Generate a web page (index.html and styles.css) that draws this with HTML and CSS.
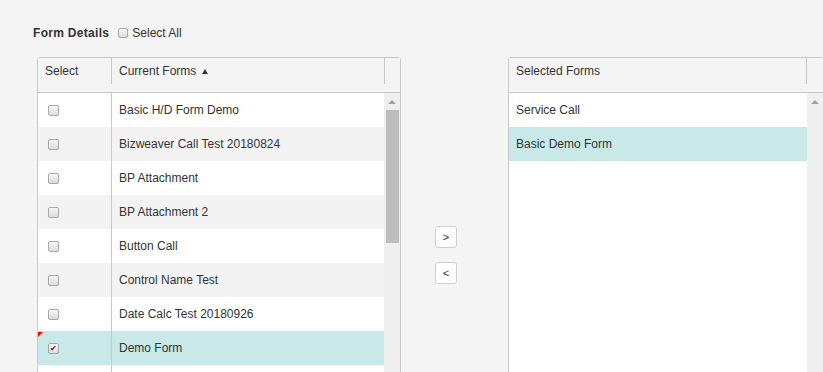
FILE: index.html
```html
<!DOCTYPE html>
<html lang="en">
<head>
  <meta charset="UTF-8">
  <meta name="viewport" content="width=device-width, initial-scale=1.0">
  <title>Form Details</title>
  <link rel="stylesheet" href="styles.css">
</head>
<body>
  <div class="page">
    <div class="title-row">
      <span class="title">Form Details</span>
      <label class="select-all"><span class="check"></span>Select All</label>
    </div>

    <div class="panes">
      <div class="grid grid-left">
        <div class="grid-head">
          <div class="th th-select">Select</div>
          <div class="th th-name">Current Forms <span class="sort-up"></span></div>
          <div class="th th-gap"></div>
        </div>
        <div class="grid-body">
          <div class="rows">
            <div class="row"><div class="cell-select"><span class="check"></span></div><div class="cell-name">Basic H/D Form Demo</div></div>
            <div class="row alt"><div class="cell-select"><span class="check"></span></div><div class="cell-name">Bizweaver Call Test 20180824</div></div>
            <div class="row"><div class="cell-select"><span class="check"></span></div><div class="cell-name">BP Attachment</div></div>
            <div class="row alt"><div class="cell-select"><span class="check"></span></div><div class="cell-name">BP Attachment 2</div></div>
            <div class="row"><div class="cell-select"><span class="check"></span></div><div class="cell-name">Button Call</div></div>
            <div class="row alt"><div class="cell-select"><span class="check"></span></div><div class="cell-name">Control Name Test</div></div>
            <div class="row"><div class="cell-select"><span class="check"></span></div><div class="cell-name">Date Calc Test 20180926</div></div>
            <div class="row selected"><div class="cell-select"><span class="dirty"></span><span class="check checked">&#10004;</span></div><div class="cell-name">Demo Form</div></div>
            <div class="row"><div class="cell-select"></div><div class="cell-name"></div></div>
          </div>
          <div class="vscroll">
            <span class="arrow-up"></span>
            <span class="thumb"></span>
          </div>
        </div>
      </div>

      <div class="movers">
        <button class="move-btn">&gt;</button>
        <button class="move-btn">&lt;</button>
      </div>

      <div class="grid grid-right">
        <div class="grid-head">
          <div class="th th-selected">Selected Forms</div>
          <div class="th th-gap"></div>
        </div>
        <div class="grid-body">
          <div class="rows">
            <div class="row"><div class="cell-plain">Service Call</div></div>
            <div class="row selected"><div class="cell-plain">Basic Demo Form</div></div>
          </div>
          <div class="vscroll">
            <span class="arrow-up"></span>
          </div>
        </div>
      </div>
    </div>
  </div>
</body>
</html>
```

FILE: styles.css
```css
body {
  margin: 0;
  background-color: #f4f4f4;
  font-family: "Liberation Sans", Arial, sans-serif;
  font-size: 12px;
  color: #333;
  overflow: hidden;
}

.page {
  padding: 25px 0 0 33px;
}

.title-row {
  display: flex;
  align-items: center;
  height: 16px;
  line-height: 16px;
  margin-bottom: 16px;
}

.title {
  font-weight: bold;
  letter-spacing: 0.3px;
  margin-right: 9px;
}

.select-all {
  display: flex;
  align-items: center;
}

.select-all .check {
  width: 10px;
  height: 10px;
  margin-right: 4px;
}

.check {
  display: inline-block;
  box-sizing: border-box;
  width: 11px;
  height: 11px;
  border: 1px solid #a8a8a8;
  border-radius: 2px;
  background: linear-gradient(#f7f7f7, #dcdcdc);
  font-size: 8px;
  line-height: 9px;
  text-align: center;
  color: #333;
}

.panes {
  display: flex;
  align-items: flex-start;
  margin-left: 4px;
}

.grid {
  flex-shrink: 0;
  border: 1px solid #c8c8c8;
  border-radius: 3px 3px 0 0;
  background-color: #fff;
}

.grid-left {
  width: 362px;
}

.grid-right {
  width: 314px;
}

.grid-head {
  display: flex;
  height: 34px;
  background-color: #f4f4f4;
  border-bottom: 1px solid #c8c8c8;
}

.th {
  box-sizing: border-box;
  height: 26px;
  line-height: 26px;
  padding-left: 7px;
  white-space: nowrap;
}

.th-select {
  width: 73px;
}

.th-name {
  width: 273px;
  border-left: 1px solid #c8c8c8;
}

.th-selected {
  width: 297px;
}

.th-gap {
  flex: 1;
  border-left: 1px solid #c8c8c8;
}

.sort-up {
  display: inline-block;
  width: 0;
  height: 0;
  margin-left: 2px;
  vertical-align: 1px;
  border-left: 3px solid transparent;
  border-right: 3px solid transparent;
  border-bottom: 5px solid #333;
}

.grid-body {
  display: flex;
  height: 300px;
}

.rows {
  flex: 1;
}

.row {
  display: flex;
  height: 34px;
  line-height: 34px;
  background-color: #fff;
}

.row.alt {
  background-color: #f3f3f3;
}

.row.selected {
  background-color: #c9e9e8;
}

.cell-select {
  position: relative;
  width: 73px;
  display: flex;
  align-items: center;
  padding-left: 10px;
  box-sizing: border-box;
}

.cell-name {
  flex: 1;
  border-left: 1px solid #c8c8c8;
  padding-left: 7px;
}

.cell-plain {
  padding-left: 7px;
}

.dirty {
  position: absolute;
  top: 1px;
  left: 0;
  width: 0;
  height: 0;
  border-top: 5px solid #f00;
  border-right: 5px solid transparent;
}

.vscroll {
  width: 16px;
  background-color: #efefef;
  display: flex;
  flex-direction: column;
  align-items: center;
}

.arrow-up {
  width: 0;
  height: 0;
  margin: 7px 0 6px;
  border-left: 4px solid transparent;
  border-right: 4px solid transparent;
  border-bottom: 4px solid #a3a3a3;
}

.thumb {
  width: 13px;
  height: 133px;
  background-color: #bdbdbd;
}

.movers {
  box-sizing: border-box;
  width: 107px;
  flex-shrink: 0;
  padding: 169px 0 0 34px;
  display: flex;
  flex-direction: column;
  align-items: flex-start;
  gap: 14px;
}

.move-btn {
  width: 22px;
  height: 22px;
  padding: 0;
  border: 1px solid #cfcfcf;
  border-radius: 3px;
  background-color: #fff;
  font-family: "Liberation Sans", Arial, sans-serif;
  font-size: 11px;
  color: #333;
}
```
